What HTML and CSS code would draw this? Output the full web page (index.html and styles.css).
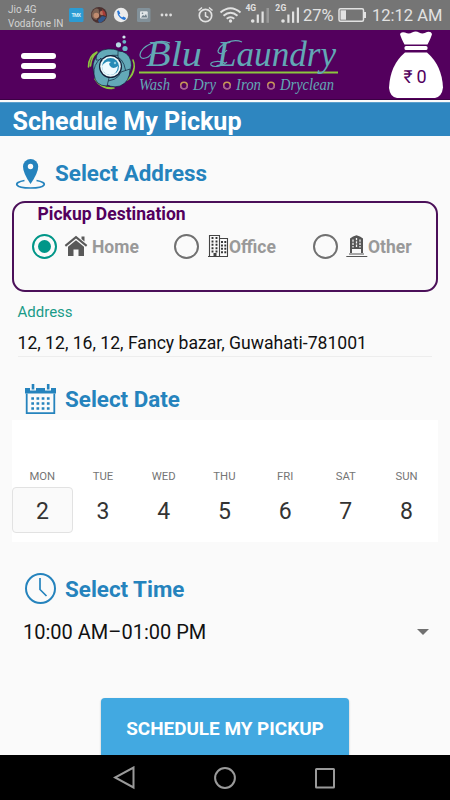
FILE: index.html
```html
<!DOCTYPE html>
<html lang="en">
<head>
<meta charset="utf-8">
<title>Blu Laundry</title>
<link rel="stylesheet" href="styles.css">
</head>
<body>
<div class="screen">
  <div class="status">
    <div class="carrier"><span>Jio 4G</span><span>Vodafone IN</span></div>
    <svg class="notices" width="106" height="30" viewBox="68 0 106 30">
      <rect x="69" y="8" width="14.5" height="14" rx="1.5" fill="#2c9bd3"/>
      <text x="71.5" y="17" font-size="5" font-weight="700" fill="#d8eef8" textLength="9.5">TMX</text>
      <circle cx="99" cy="15" r="8" fill="#4b3130"/>
      <path d="M91.5 14q3-7 7-5l1 5-3 6q-5-1-5-6z" fill="#7d6253"/>
      <circle cx="96.3" cy="15.5" r="2.8" fill="#c08c70"/><circle cx="102" cy="13" r="2.2" fill="#b9705c"/>
      <path d="M98 20l4-4 4 1q-2 5-7 6z" fill="#31588c"/><path d="M102 9l3 3 1 4-3-1z" fill="#a93c37"/>
      <circle cx="121" cy="15" r="7.2" fill="#ececec"/>
      <path d="M117.1 11.1l1.7-.7 1.5 3-1.2 1.2q1 2 3 3l1.3-1.2 2.7 1.6-1 1.8q-2 .7-5-2-3-3-3-6.700z" fill="#2878d8"/>
      <rect x="137" y="8" width="13.500" height="14" rx="1.500" fill="#82919a"/>
      <rect x="140" y="11.300" width="7.700" height="7.300" rx="1" fill="#e0e5e8"/>
      <path d="M141 17.500l2-2.500 1.500 1 1.500-2 1.300 3.500z" fill="#71818b"/><circle cx="142.500" cy="13.300" r=".8" fill="#71818b"/>
      <circle cx="162" cy="15" r="1.400" fill="#ddd"/><circle cx="166.300" cy="15" r="1.400" fill="#ddd"/><circle cx="170.600" cy="15" r="1.400" fill="#ddd"/>
    </svg>
    <svg class="signals" width="103" height="30" viewBox="197 0 103 30" fill="none" stroke="#e2e2e2">
      <circle cx="205.500" cy="15.500" r="6.200" stroke-width="1.700"/>
      <path d="M205.500 12v4l3 1.700M198.500 10.500l3.500-3M212.500 10.500l-3.500-3" stroke-width="1.500"/>
      <path d="M220.500 12.500q10-8.500 20 0M223.500 15.700q7-6 14 0M226.700 18.700q3.800-3 7.600 0" stroke-width="2"/>
      <circle cx="230.500" cy="21" r="1.700" fill="#e2e2e2" stroke="none"/>
      <g fill="#e2e2e2" stroke="none">
        <text x="245.500" y="11.300" font-size="8.500" font-weight="700" textLength="10.500">4G</text>
        <text x="275.300" y="11.300" font-size="8.500" font-weight="700" textLength="11">2G</text>
        <circle cx="252.700" cy="21" r="1.800"/><rect x="256.700" y="14.500" width="2.200" height="8.300"/><rect x="261.500" y="11.500" width="2.200" height="11.300"/><rect x="266.500" y="8" width="2.500" height="14.800" fill="#989898"/>
        <circle cx="283" cy="21" r="1.800"/><rect x="287.300" y="14.500" width="2.200" height="8.300"/><rect x="292" y="11.500" width="2.200" height="11.300"/><rect x="296.800" y="7.500" width="2.200" height="15.300"/>
      </g>
    </svg>
    <span class="percent">27%</span>
    <svg class="battery" width="29" height="16" viewBox="0 0 29 16"><rect x="1" y="1.800" width="24.500" height="12.400" rx="1.500" fill="none" stroke="#e2e2e2" stroke-width="1.500"/><rect x="2.500" y="3.300" width="5.500" height="9.400" fill="#e2e2e2"/><rect x="26" y="5" width="2" height="6" fill="#e2e2e2"/></svg>
    <span class="clock">12:12 AM</span>
  </div>

  <header class="header">
    <div class="menu"><i></i><i></i><i></i></div>
    <svg class="logo" width="260" height="70" viewBox="84 30 260 70">
      <g fill="none" stroke="#8cc63f" stroke-width="1.600" stroke-linecap="round">
        <path d="M88.500 67q0-11 8.500-15M90.500 66q1-9 6-13M95 79q6 10 19 9M98 83q6 6 14 5.500M132 75q4-8 1-15M127.500 80q5-4 6.500-12"/>
      </g>
      <g fill="#63a9b8" stroke="#12233c" stroke-width=".7">
        <circle cx="110.500" cy="67" r="17.500"/>
        <path d="M96 60q0-10 12-11 12-1 17 8-15-5-22 3z"/>
        <path d="M118 51q10 0 13 10 2 9-5 16 0-15-8-20z"/>
        <path d="M130 69q0 13-10 17-10 3-18-5 15 1 19-9z"/>
        <path d="M107 86q-12 0-13-12-1-9 7-16-1 13 8 20z"/>
      </g>
      <circle cx="110.500" cy="66.500" r="11.500" fill="#111d37"/>
      <circle cx="110.500" cy="66.500" r="10.300" fill="#e9f7fa"/>
      <circle cx="110.500" cy="66.500" r="8.500" fill="#258bb7"/>
      <path d="M102 66q4-6 9-4-3 1-1 4 3 4 8 0-1 9-8 9-8-1-8-9z" fill="#eefaff"/>
      <circle cx="115" cy="63" r="1.200" fill="#8fd0e2"/>
      <g fill="#6bb8c8"><circle cx="118.500" cy="44.800" r="2.600" fill="#b5dce3"/><circle cx="125" cy="48.500" r="2.600"/><circle cx="124.300" cy="41.800" r="1.900"/><circle cx="124" cy="37" r="1.600" fill="#d0e7ed"/></g>
      <path d="M139 72.500h199" stroke="#8cc63f" stroke-width="2"/>
      <g class="brand" fill="#62a8b5">
        <text x="146" y="66" font-size="36" textLength="56" lengthAdjust="spacingAndGlyphs">Blu</text>
        <text x="217" y="66" font-size="36" textLength="119" lengthAdjust="spacingAndGlyphs">Laundry</text>
      </g>
      <path d="M170 43c-12-5-29 3-30 12 0 5 8 4 11-1M242 42c-9-4-22 2-24 9 0 4 6 3 9-1M225 63c-7-3-16-1-14 2 3 3 12 1 16-3" fill="none" stroke="#62a8b5" stroke-width="1.200"/>
      <g class="services" fill="#62a8b5">
        <text x="139" y="90" textLength="31" lengthAdjust="spacingAndGlyphs">Wash</text>
        <text x="193" y="90" textLength="23" lengthAdjust="spacingAndGlyphs">Dry</text>
        <text x="236" y="90" textLength="25" lengthAdjust="spacingAndGlyphs">Iron</text>
        <text x="280" y="90" textLength="54" lengthAdjust="spacingAndGlyphs">Dryclean</text>
      </g>
      <g fill="none" stroke="#c99a55" stroke-width="1.500"><circle cx="184" cy="85.500" r="3.300"/><circle cx="227" cy="85.500" r="3.300"/><circle cx="271" cy="85.500" r="3.300"/></g>
      <g fill="none" stroke="#a55c9b" stroke-width="1.500"><path d="M180.700 85.500a3.300 3.300 0 0 0 6.600 0M223.700 85.500a3.300 3.300 0 0 0 6.600 0M267.700 85.500a3.300 3.300 0 0 0 6.600 0"/></g>
    </svg>
    <svg class="bag" width="56" height="70" viewBox="388 30 56 70">
      <path d="M400 34q1-2.500 5-1.500 4 2 7 0 4-2 7 0 4 2 8-.500 4-1 5 2-1 4-4.500 10.500h-23Q401 38 400 34z" fill="#fff"/>
      <rect x="404.500" y="46" width="23" height="4" rx="1.500" fill="#fff"/>
      <path d="M405 52.500h22q15 13 16 35-1 9-8 10.500h-38q-7-1-8-10 1-23 16-35.500z" fill="#fff"/>
      <text x="403.500" y="83" font-size="18" fill="#53005d" textLength="9" lengthAdjust="spacingAndGlyphs">₹</text>
      <text x="416.500" y="83" font-size="18" fill="#53005d">0</text>
    </svg>
  </header>

  <h1 class="title">Schedule My Pickup</h1>

  <main class="content">
    <h2 class="heading address-heading">
      <svg width="32" height="32" viewBox="15 157 32 32"><path d="M30.500 184Q23 173 23 166.500a7.600 7.600 0 0 1 15.200 0Q38.200 173 30.500 184z" fill="#2583bd"/><circle cx="30.500" cy="166.500" r="2.700" fill="#fafafa"/><path d="M24.500 180.500c-12 2-10 7.500 6 7.500s18-5.500 6-7.500" fill="none" stroke="#2583bd" stroke-width="1.700"/></svg>
      <span>Select Address</span>
    </h2>

    <section class="destination">
      <h3>Pickup Destination</h3>
      <div class="options">
        <div class="option">
          <span class="radio on"></span>
          <svg width="24" height="24" viewBox="64 234 24 24" fill="#595959"><path d="M76 235.700l11.300 9.400-1.300 1.700L76 238.500 66 246.800l-1.300-1.700zM81.500 236.500h3v5l-3-2.500z"/><path d="M76 240.300l8 6.500V256h-5.500v-6.500h-5V256H68v-9.200z"/></svg>
          <b>Home</b>
        </div>
        <div class="option office">
          <span class="radio"></span>
          <svg width="22" height="24" viewBox="207 234 22 24"><path d="M209.500 256v-20.500h10V256M219.500 238.500h8V256M208 256.500h20" fill="none" stroke="#444" stroke-width="1.100"/><path d="M212.500 237v16M216.500 237v16M222 241v13M225.300 241v13" stroke="#333" stroke-width="1.900" stroke-dasharray="2 1.400"/><path d="M213.500 256v-3h3v3" fill="#444"/></svg>
          <b>Office</b>
        </div>
        <div class="option other">
          <span class="radio"></span>
          <svg width="22" height="24" viewBox="347 234 22 24"><path d="M351 253v-14.500l3-2 3.500-1.200 3.500 1.200 3 2V253h-2v-4h-9v4z" fill="#555"/><path d="M354 239.500v8M357.500 238v9M361 239.500v8" stroke="#f5f5f5" stroke-width="1.300" stroke-dasharray="2.300 1"/><path d="M350 254h15M347.300 256.500h21" stroke="#555" stroke-width="1.100"/></svg>
          <b>Other</b>
        </div>
      </div>
    </section>

    <section class="field">
      <label>Address</label>
      <p>12, 12, 16, 12, Fancy bazar, Guwahati-781001</p>
    </section>

    <h2 class="heading date-heading">
      <svg width="32" height="32" viewBox="0 0 32 32"><path d="M2.700 10.500V30.200h27.600V10.500" fill="none" stroke="#2583bd" stroke-width="1.800"/><path d="M1 5h5v2.500h6V5h9v2.500h6V5h5v5.500H1z" fill="#2583bd"/><path d="M9 1v5.500M24.200 1v5.500" stroke="#2583bd" stroke-width="2.600"/><path d="M7.300 15.500h18.500M7.300 20.500h18.500M7.300 25.500h18.500" stroke="#2583bd" stroke-width="2.600" stroke-dasharray="2.700 2.500"/></svg>
      <span>Select Date</span>
    </h2>

    <section class="calendar">
      <div class="day"><span>MON</span><b class="selected">2</b></div>
      <div class="day"><span>TUE</span><b>3</b></div>
      <div class="day"><span>WED</span><b>4</b></div>
      <div class="day"><span>THU</span><b>5</b></div>
      <div class="day"><span>FRI</span><b>6</b></div>
      <div class="day"><span>SAT</span><b>7</b></div>
      <div class="day"><span>SUN</span><b>8</b></div>
    </section>

    <h2 class="heading time-heading">
      <svg width="32" height="32" viewBox="0 0 32 32" fill="none" stroke="#2583bd"><circle cx="16.500" cy="15.500" r="14.500" stroke-width="2"/><path d="M16 5V16.500l6.500 6.500" stroke-width="1.700"/></svg>
      <span>Select Time</span>
    </h2>
    <div class="select"><span>10:00 AM–01:00 PM</span><i></i></div>
    <button class="submit">SCHEDULE MY PICKUP</button>
  </main>

  <nav class="nav">
    <svg width="24" height="24" viewBox="0 0 24 24"><path d="M20.500 1.500v20L2 11.500z"/></svg>
    <svg width="24" height="24" viewBox="0 0 24 24"><circle cx="12" cy="12" r="9.900"/></svg>
    <svg width="24" height="24" viewBox="0 0 24 24"><rect x="3" y="3" width="18" height="18.500" rx=".5"/></svg>
  </nav>
</div>
</body>
</html>
```

FILE: styles.css
```css
* { box-sizing: border-box; }
body { margin: 0; font-family: Roboto, "Noto Sans", sans-serif; background: #fafafa; }
h1, h2, h3, p { margin: 0; }
svg { display: block; flex: none; }
.screen { width: 450px; height: 800px; display: flex; flex-direction: column; overflow: hidden; }

.status { height: 30px; flex: none; display: flex; align-items: center; background: #757575; color: #e2e2e2; white-space: nowrap; }
.carrier { width: 60px; margin-left: 8px; padding-top: 3px; display: flex; flex-direction: column; font-size: 10px; line-height: 13.5px; color: #d2d2d2; }
.signals { margin-left: 23px; }
.percent { width: 35px; margin-left: 3px; font-size: 16.5px; }
.battery { margin-left: 0; }
.clock { margin-left: 5px; font-size: 16.5px; }

.header { height: 70px; flex: none; display: flex; background: #53005d; border-bottom: 1px solid #3c0044; }
.menu { width: 35px; margin: 23px 27px 0 21px; display: flex; flex-direction: column; gap: 4px; }
.menu i { height: 6px; border-radius: 3px; background: #fff; }
.logo { margin-left: 1px; }
.bag { margin-left: 44px; }
.brand { font-family: "Liberation Serif", serif; font-style: italic; }
.services { font-family: "Liberation Serif", serif; font-style: italic; font-size: 16px; }

.title { height: 34px; flex: none; margin-top: 2px; padding-left: 12.5px; background: #2e86c0; border-top: 1px solid #5b9fcc; color: #fff; font-size: 25.1px; line-height: 37px; font-weight: 700; white-space: nowrap; }

.content { flex: 1; min-height: 0; overflow: hidden; display: flex; flex-direction: column; }
.heading { height: 32px; flex: none; display: flex; align-items: center; gap: 9px; color: #2583bd; font-size: 22.4px; font-weight: 700; white-space: nowrap; }
.address-heading { margin: 21px 0 0 15px; gap: 8px; }
.destination { height: 91px; flex: none; margin: 12px 12px 0; border: 2px solid #4b1059; border-radius: 13px; }
.destination h3 { margin: 1px 0 0 23.5px; font-size: 17.5px; line-height: 21px; font-weight: 700; color: #53005d; }
.options { display: flex; margin: 8px 0 0 18px; }
.option { width: 142px; height: 26px; flex: none; display: flex; align-items: center; color: #999; }
.option.office { width: 139px; }
.option.other { width: 110px; }
.option b { font-size: 17.5px; font-weight: 700; line-height: 26px; padding-top: 1px; }
.option svg { margin-right: 4px; }
.option.office svg, .option.other svg { margin-right: 0; }
.radio { width: 25px; height: 25px; flex: none; margin-right: 7px; border: 2px solid #707070; border-radius: 50%; display: flex; align-items: center; justify-content: center; }
.office .radio { margin-right: 8px; }
.other .radio { margin-right: 8px; }
.radio.on { border-color: #009688; }
.radio.on::after { content: ""; width: 13px; height: 13px; border-radius: 50%; background: #009688; }

.field { height: 65px; flex: none; margin: 0 18px 0 17.5px; padding-top: 10px; border-bottom: 1px solid #ededed; }
.field label { display: block; font-size: 15px; line-height: 20px; color: #199b88; }
.field p { margin-top: 9px; font-size: 17.6px; line-height: 24px; color: #111; white-space: nowrap; }

.date-heading { margin: 26px 0 0 24px; }
.calendar { height: 122px; flex: none; margin: 5px 12px 0; padding-top: 49px; display: grid; grid-template-columns: repeat(7, 60.7px); background: #fff; }
.day { display: flex; flex-direction: column; text-align: center; }
.day span { font-size: 11.3px; line-height: 16px; color: #757575; }
.day b { height: 46px; margin-top: 2px; border: 1px solid transparent; border-radius: 4px; font-size: 23px; line-height: 47px; font-weight: 400; color: #333; }
.day .selected { background: #fafafa; border-color: #e2e2e2; }

.time-heading { margin: 31px 0 0 24px; }
.select { height: 30px; flex: none; margin: 12px 21px 0 23px; display: flex; align-items: center; justify-content: space-between; font-size: 20px; color: #111; }
.select i { border: 6px solid transparent; border-top-color: #707070; border-bottom: 0; }
.submit { height: 64px; flex: none; align-self: center; width: 248px; margin: 51px 0 0; padding: 0 0 4px; border: 0; border-radius: 4px; background: #42a9e1; box-shadow: 0 1px 2px rgba(0,0,0,.3); color: #fff; font: 700 18.9px Roboto, sans-serif; white-space: nowrap; }

.nav { height: 45px; flex: none; display: flex; justify-content: center; align-items: center; gap: 76px; background: #000; }
.nav svg { fill: none; stroke: #9a9a9a; stroke-width: 2; }
```
